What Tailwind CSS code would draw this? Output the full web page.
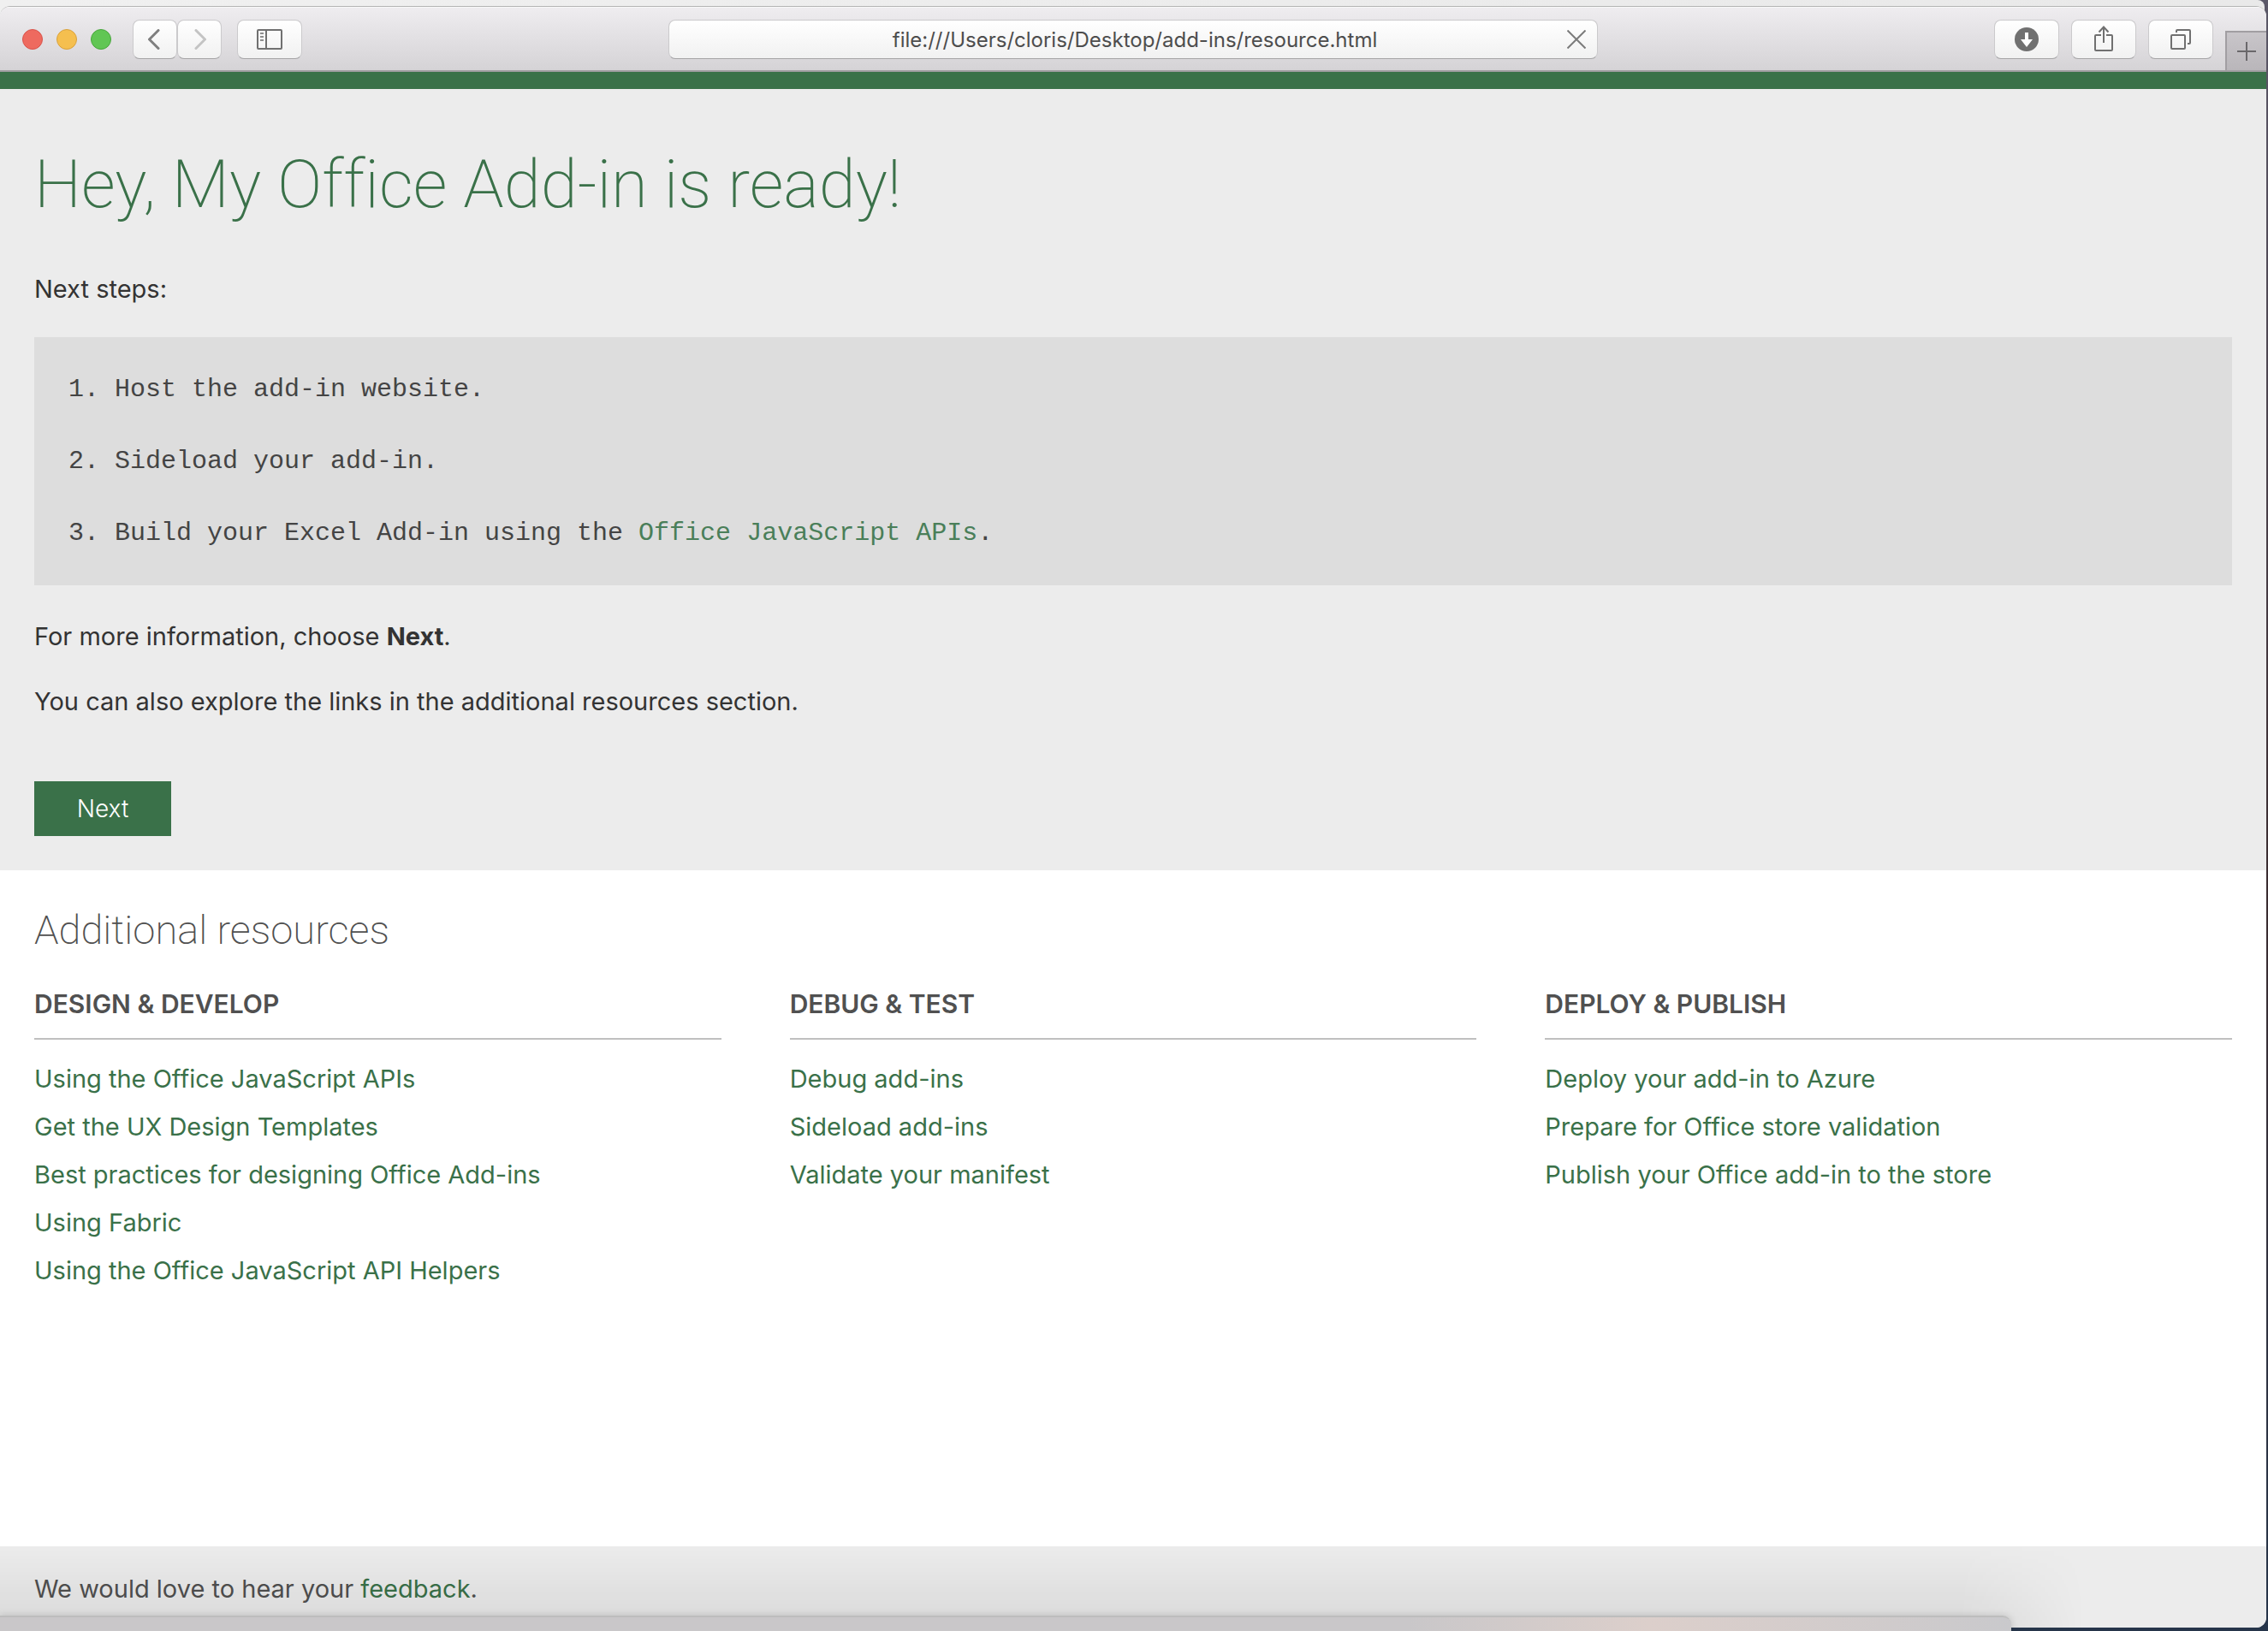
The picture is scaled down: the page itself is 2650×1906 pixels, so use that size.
<!DOCTYPE html>
<html lang="en">
<head>
<meta charset="utf-8">
<meta name="viewport" content="width=device-width, initial-scale=1">
<title>My Office Add-in</title>
<script src="https://cdn.jsdelivr.net/npm/@tailwindcss/browser@4"></script>
</head>
<body class="bg-[#1b2430] font-['Inter','Liberation_Sans',sans-serif]">
<div class="relative flex min-h-screen flex-col overflow-hidden bg-linear-to-b from-[#5b5868] via-[#3a2c30] via-55% to-[#26354a] pr-0.5 pb-1">

  <!-- edge of the window behind -->
  <div class="absolute inset-x-0 top-0 mr-1 h-8 rounded-tr-lg bg-linear-to-r from-[#f0f0f0] to-[#e9e9e9]"></div>

  <div class="relative mt-[7px] flex flex-1 flex-col overflow-hidden rounded-[12px] border-t border-[#b4b4b4] bg-white">
    <!-- browser toolbar -->
    <header class="flex h-[76px] shrink-0 items-start border-b-2 border-[#a19ea2] bg-linear-to-b from-[#efedf0] to-[#d5d3d6] shadow-[inset_0_1px_0_#f8f8f8]">
      <div class="flex flex-1 items-center pt-[15px]">
        <div class="ml-[26px] flex gap-4">
          <button aria-label="Close" class="size-6 rounded-full border border-[#d9534b] bg-[#ee6a5f]"></button>
          <button aria-label="Minimize" class="size-6 rounded-full border border-[#d9a13c] bg-[#f5bf4f]"></button>
          <button aria-label="Zoom" class="size-6 rounded-full border border-[#48a63c] bg-[#61c654]"></button>
        </div>
        <button aria-label="Back" class="ml-[25px] flex h-[46px] w-[52px] items-center justify-center rounded-lg border border-[#cbcacc] border-b-[#a5a4a6] bg-linear-to-b from-white to-[#f1f1f1]">
          <svg class="h-6 w-4" viewBox="0 0 16 24" fill="none" stroke="#7f7f7f" stroke-width="3" stroke-linecap="round" stroke-linejoin="round"><path d="M12 1.500 1.500 12 12 22.500"/></svg>
        </button>
        <button aria-label="Forward" class="flex h-[46px] w-[52px] items-center justify-center rounded-lg border border-[#cbcacc] border-b-[#a5a4a6] bg-linear-to-b from-white to-[#f1f1f1]">
          <svg class="h-6 w-4" viewBox="0 0 16 24" fill="none" stroke="#c4c4c4" stroke-width="3" stroke-linecap="round" stroke-linejoin="round"><path d="M4 1.500 14.500 12 4 22.500"/></svg>
        </button>
        <button aria-label="Show sidebar" class="ml-[18px] flex h-[46px] w-[76px] items-center justify-center rounded-lg border border-[#cbcacc] border-b-[#a5a4a6] bg-linear-to-b from-white to-[#f1f1f1]">
          <svg class="h-6 w-[30px]" viewBox="0 0 30 24" fill="none" stroke="#707070" stroke-width="2"><rect x="1" y="1" width="28" height="22" rx="1"/><path d="M11 1v22"/><path d="M4 5h4M4 9h4M4 13h4" stroke="#8e8e8e"/></svg>
        </button>
      </div>
      <div class="mt-[15px] flex h-[46px] w-[41%] items-center rounded-lg border border-[#cbcacc] border-b-[#a5a4a6] bg-linear-to-b from-white to-[#f1f1f1]">
        <input aria-label="Address" type="text" value="file:///Users/cloris/Desktop/add-ins/resource.html" class="w-full min-w-0 flex-1 bg-transparent pt-0.5 pl-10 text-center text-[24px] text-[#4d4d4d] outline-none">
        <button aria-label="Stop loading" class="mr-3 flex size-6 items-center justify-center">
          <svg class="size-[22px]" viewBox="0 0 22 22" fill="none" stroke="#7b7b7b" stroke-width="2"><path d="M.5.5l21 21M21.500.5l-21 21"/></svg>
        </button>
      </div>
      <div class="flex flex-1 items-start justify-end gap-[14px]">
        <button aria-label="Downloads" class="mt-[15px] flex h-[46px] w-[76px] items-center justify-center rounded-lg border border-[#cbcacc] border-b-[#a5a4a6] bg-linear-to-b from-white to-[#f1f1f1]">
          <svg class="size-7" viewBox="0 0 28 28"><circle cx="14" cy="14" r="14" fill="#707070"/><path d="M12 6h4v8h5l-7 9-7-9h5z" fill="#fff"/></svg>
        </button>
        <button aria-label="Share" class="mt-[15px] flex h-[46px] w-[76px] items-start justify-center rounded-lg border border-[#cbcacc] border-b-[#a5a4a6] bg-linear-to-b from-white to-[#f1f1f1] pt-1.5">
          <svg class="h-[30px] w-[22px]" viewBox="0 0 22 30" fill="none" stroke="#707070" stroke-width="2"><path d="M8 11H2a1 1 0 0 0-1 1v16a1 1 0 0 0 1 1h18a1 1 0 0 0 1-1V12a1 1 0 0 0-1-1h-6M11 20V1.500M5.500 7.500 11 1.500l5.500 6"/></svg>
        </button>
        <button aria-label="Show all tabs" class="mt-[15px] flex h-[46px] w-[76px] items-center justify-center rounded-lg border border-[#cbcacc] border-b-[#a5a4a6] bg-linear-to-b from-white to-[#f1f1f1]">
          <svg class="size-6" viewBox="0 0 24 24" fill="none" stroke="#707070" stroke-width="2"><rect x="1" y="7" width="16" height="16" rx="1"/><path d="M7 4V2a1 1 0 0 1 1-1h14a1 1 0 0 1 1 1v14a1 1 0 0 1-1 1h-2"/></svg>
        </button>
        <button aria-label="New tab" class="mt-7 flex h-[46px] w-12 items-center justify-center border-t-2 border-l-2 border-[#a19ea2] bg-linear-to-b from-[#c8c5c9] to-[#b9b6ba]">
          <svg class="size-[22px]" viewBox="0 0 22 22" fill="none" stroke="#6a686b" stroke-width="2"><path d="M11 0v22M0 11h22"/></svg>
        </button>
      </div>
    </header>

    <main class="flex flex-1 flex-col text-[29px] leading-[36px]">
      <section class="border-t-[20px] border-[#3a7149] bg-[#ececec] px-10 pt-[60px] pb-10 text-[#333]">
        <h1 class="font-['Roboto','Inter',sans-serif] text-[78px] leading-[104px] font-extralight text-[#3a7149] [font-variant-ligatures:none]">Hey, My Office Add-in is ready!</h1>
        <p class="mt-[52px]">Next steps:</p>
        <ol class="mt-[38px] flex flex-col gap-12 bg-[#ddd] p-10 py-[43px] font-['Liberation_Mono',monospace] text-[30px] text-[#444]">
          <li>1. Host the add-in website.</li>
          <li>2. Sideload your add-in.</li>
          <li>3. Build your Excel Add-in using the <a href="#" class="text-[#4a7f59]">Office JavaScript APIs</a>.</li>
        </ol>
        <p class="mt-[42px]">For more information, choose <b class="font-bold">Next</b>.</p>
        <p class="mt-10">You can also explore the links in the additional resources section.</p>
        <button class="mt-[75px] block h-16 w-40 bg-[#3a7149] text-[28px] font-light text-white">Next</button>
      </section>

      <section class="flex-1 px-10 pt-10 text-[#505050]">
        <h2 class="font-['Roboto','Inter',sans-serif] text-[47px] leading-[60px] font-extralight text-[#505050]">Additional resources</h2>
        <div class="mt-[38px] grid grid-cols-3 gap-20">
          <div>
            <h3 class="border-b-2 border-[#bfbfbf] pb-[22px] text-[30px] font-semibold">DESIGN &amp; DEVELOP</h3>
            <ul class="mt-7 flex flex-col gap-5 text-[#3a7149]">
              <li><a href="#">Using the Office JavaScript APIs</a></li>
              <li><a href="#">Get the UX Design Templates</a></li>
              <li><a href="#">Best practices for designing Office Add-ins</a></li>
              <li><a href="#">Using Fabric</a></li>
              <li><a href="#">Using the Office JavaScript API Helpers</a></li>
            </ul>
          </div>
          <div>
            <h3 class="border-b-2 border-[#bfbfbf] pb-[22px] text-[30px] font-semibold">DEBUG &amp; TEST</h3>
            <ul class="mt-7 flex flex-col gap-5 text-[#3a7149]">
              <li><a href="#">Debug add-ins</a></li>
              <li><a href="#">Sideload add-ins</a></li>
              <li><a href="#">Validate your manifest</a></li>
            </ul>
          </div>
          <div>
            <h3 class="border-b-2 border-[#bfbfbf] pb-[22px] text-[30px] font-semibold">DEPLOY &amp; PUBLISH</h3>
            <ul class="mt-7 flex flex-col gap-5 text-[#3a7149]">
              <li><a href="#">Deploy your add-in to Azure</a></li>
              <li><a href="#">Prepare for Office store validation</a></li>
              <li><a href="#">Publish your Office add-in to the store</a></li>
            </ul>
          </div>
        </div>
      </section>

      <footer class="bg-[#ececec] px-10 pt-8 pb-[27px] text-[#505050]">
        <p>We would love to hear your <a href="#" class="text-[#3a7149]">feedback</a>.</p>
      </footer>
    </main>
    <!-- shade that the front window casts on the footer -->
    <div class="pointer-events-none absolute bottom-0 left-0 h-24 w-[92%] bg-linear-to-b from-transparent to-black/8 mask-r-from-94%"></div>
  </div>

  <!-- top edge of the window in front -->
  <div class="absolute bottom-0 left-0 h-[18px] w-[2350px] max-w-[89%] rounded-tr-[10px] border-t-2 border-[#bdbdbd] bg-linear-to-r from-[#c9c7c9] from-70% via-[#dccfcb] via-82% to-[#c9c9cc] shadow-[0_0_8px_rgba(0,0,0,0.15)]"></div>
</div>
</body>
</html>
